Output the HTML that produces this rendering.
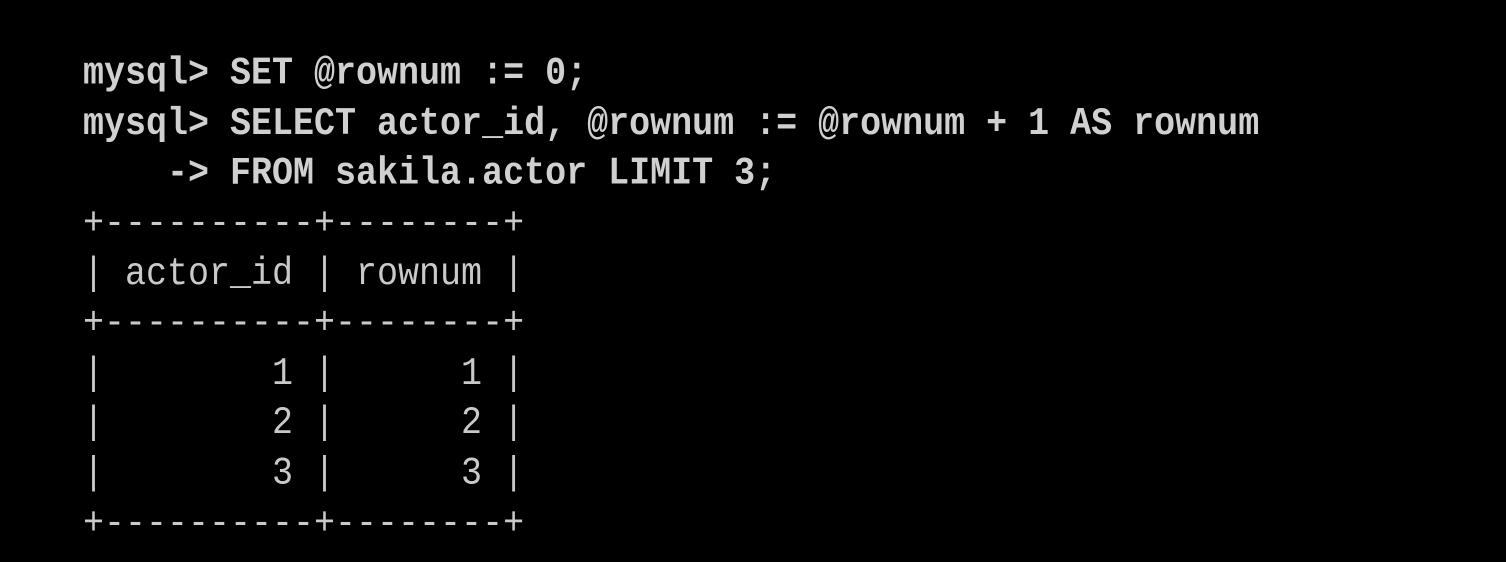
<!DOCTYPE html>
<html><head><style>
html,body{margin:0;padding:0;background:#000;width:1506px;height:562px;overflow:hidden}
pre{position:absolute;left:83px;top:49px;margin:0;font-family:"Liberation Mono",monospace;font-size:35px;line-height:44.64px;color:#c9c9c9;transform:scaleY(1.12);transform-origin:0 0}
b{font-weight:bold;color:#d0d0d0}
</style></head><body>
<pre><b>mysql&gt; SET @rownum := 0;
mysql&gt; SELECT actor_id, @rownum := @rownum + 1 AS rownum
    -&gt; FROM sakila.actor LIMIT 3;</b>
+----------+--------+
| actor_id | rownum |
+----------+--------+
|        1 |      1 |
|        2 |      2 |
|        3 |      3 |
+----------+--------+</pre>
</body></html>
